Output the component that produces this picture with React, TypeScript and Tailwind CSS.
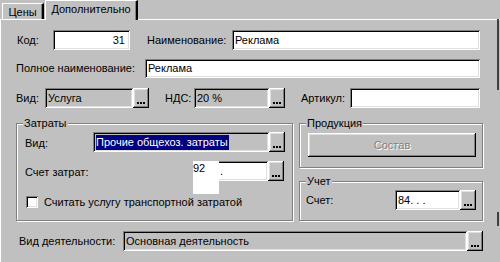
import React from "react";

const sunken =
  "shadow-[inset_1px_1px_0_#808080,inset_-1px_-1px_0_#ffffff,inset_2px_2px_0_#000000,inset_-2px_-2px_0_#dfdfdf]";
const raised =
  "shadow-[inset_-1px_-1px_0_#000000,inset_1px_1px_0_#ffffff,inset_-2px_-2px_0_#808080,inset_2px_2px_0_#dfdfdf]";

function Dots() {
  return (
    <div className={`w-[16px] h-full bg-[#c0c0c0] ${raised} flex items-end justify-center pb-[4px] gap-[1px] shrink-0`}>
      <span className="w-[2px] h-[2px] bg-black" />
      <span className="w-[2px] h-[2px] bg-black" />
      <span className="w-[2px] h-[2px] bg-black" />
    </div>
  );
}

function Group({ label, className, children }: { label: string; className: string; children?: React.ReactNode }) {
  return (
    <div className={`relative border border-[#808080] shadow-[inset_1px_1px_0_#ffffff,1px_1px_0_#ffffff] ${className}`}>
      <span className="absolute -top-[8px] left-[6px] px-[1px] bg-[#c0c0c0] leading-[14px]">{label}</span>
      {children}
    </div>
  );
}

export default function App() {
  return (
    <div className="relative w-[500px] h-[262px] overflow-hidden bg-[#c0c0c0] text-black text-[11px] font-['Liberation_Sans',Arial,sans-serif] leading-none">
      {/* tabs */}
      <div className="flex h-[19px] items-end">
        <div className="ml-[2px] w-[42px] h-[16px] border-l border-t border-white border-r-2 border-r-[#000] shadow-[inset_-1px_0_0_#808080] flex items-center justify-center pt-[1px]">
          Цены
        </div>
        <div className="relative z-10 ml-[1px] w-[93px] h-[20px] -mb-[1px] bg-[#c0c0c0] border-l border-t border-white border-r-2 border-r-[#000] shadow-[inset_-1px_0_0_#808080] flex items-start justify-center pt-[3px]">
          Дополнительно
        </div>
      </div>
      {/* panel */}
      <div className="h-[243px] border-t border-l border-white">
        {/* row 1 */}
        <div className="flex items-center h-[20px] mt-[10px]">
          <span className="ml-[16px] w-[36px]">Код:</span>
          <div className={`w-[77px] h-full bg-white ${sunken} flex items-center justify-end pr-[5px]`}>31</div>
          <span className="ml-[17px] w-[85px]">Наименование:</span>
          <div className={`w-[248px] h-full bg-white ${sunken} flex items-center px-[3px]`}>Реклама</div>
        </div>
        {/* row 2 */}
        <div className="flex items-center h-[19px] mt-[9px]">
          <span className="ml-[15px] w-[129px]">Полное наименование:</span>
          <div className={`w-[335px] h-full bg-white ${sunken} flex items-center px-[3px]`}>Реклама</div>
        </div>
        {/* row 3 */}
        <div className="flex items-center h-[20px] mt-[10px]">
          <span className="ml-[15px] w-[29px]">Вид:</span>
          <div className={`w-[88px] h-full bg-[#c0c0c0] ${sunken} flex items-center px-[3px]`}>Услуга</div>
          <Dots />
          <span className="ml-[16px] w-[29px]">НДС:</span>
          <div className={`w-[75px] h-full bg-[#c0c0c0] ${sunken} flex items-center px-[3px]`}>20 %</div>
          <Dots />
          <span className="ml-[16px] w-[49px]">Артикул:</span>
          <div className={`w-[130px] h-full bg-white ${sunken}`} />
        </div>
        {/* groups */}
        <div className="flex mt-[15px] h-[98px]">
          <Group label="Затраты" className="ml-[15px] w-[277px] h-full">
            <div className="flex items-center h-[20px] mt-[8px]">
              <span className="ml-[8px] w-[68px] pt-[2px]">Вид:</span>
              <div className={`w-[176px] h-full bg-[#c0c0c0] ${sunken} flex items-center px-[3px]`}>
                <span className="bg-[#000080] text-white leading-[15px] pr-[1px]">Прочие общехоз. затраты</span>
              </div>
              <Dots />
            </div>
            <div className="flex items-center h-[20px] mt-[9px]">
              <span className="ml-[8px] w-[168px] pt-[2px]">Счет затрат:</span>
              <div className={`relative w-[75px] h-full bg-white ${sunken}`}>
                <div className="absolute left-0 top-0 w-[26px] h-[33px] bg-white pt-[2px]">92</div>
                <span className="absolute left-[27px] top-[5px]">.</span>
              </div>
              <Dots />
            </div>
            <div className="flex items-center h-[14px] mt-[14px]">
              <span className={`ml-[9px] w-[12px] h-[12px] bg-white ${sunken}`} />
              <span className="ml-[6px]">Считать услугу транспортной затратой</span>
            </div>
          </Group>
          <div className="ml-[6px] w-[184px] flex flex-col">
            <Group label="Продукция" className="h-[45px]">
              <div
                className={`ml-[8px] mt-[9px] w-[168px] h-[24px] ${raised} flex items-center justify-center text-[#808080] [text-shadow:1px_1px_0_#ffffff]`}
              >
                Состав
              </div>
            </Group>
            <Group label="Учет" className="mt-[13px] h-[40px]">
              <div className="flex items-center h-[20px] mt-[8px]">
                <span className="ml-[6px] w-[89px]">Счет:</span>
                <div className={`w-[65px] h-full bg-white ${sunken} flex items-center px-[3px]`}>84. . .</div>
                <Dots />
              </div>
            </Group>
          </div>
        </div>
        {/* bottom row */}
        <div className="flex items-center h-[20px] mt-[10px]">
          <span className="ml-[18px] w-[104px]">Вид деятельности:</span>
          <div className={`w-[344px] h-full bg-[#c0c0c0] ${sunken} flex items-center px-[3px]`}>Основная деятельность</div>
          <Dots />
        </div>
      </div>
      {/* right edge artifacts */}
      <div className="absolute right-[1px] top-[19px] w-[2px] h-[71px] bg-[#404040]" />
      <div className="absolute right-[1px] top-[212px] w-[2px] h-[14px] bg-[#404040]" />
    </div>
  );
}
